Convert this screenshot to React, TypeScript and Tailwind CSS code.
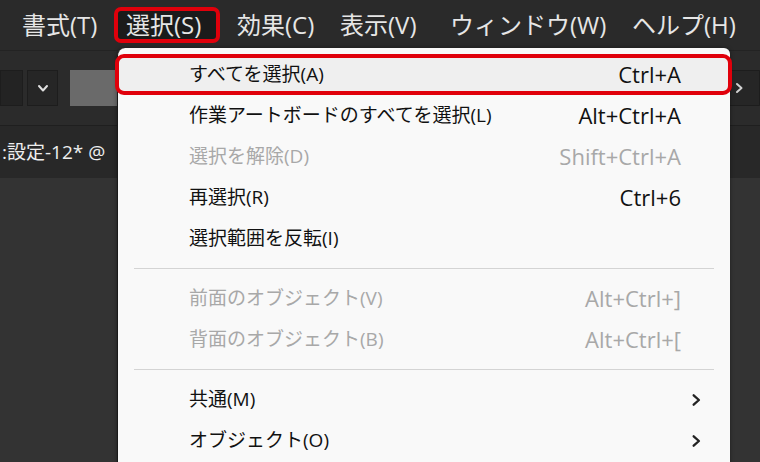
import { ReactNode } from 'react'

const font = { fontFamily: '"Open Sans", "Noto Sans CJK JP", sans-serif' }

type Row =
  | { kind: 'sep' }
  | { kind: 'item'; label: string; shortcut?: string; disabled?: boolean; sub?: boolean; active?: boolean }

const rows: Row[] = [
  { kind: 'item', label: 'すべてを選択(A)', shortcut: 'Ctrl+A', active: true },
  { kind: 'item', label: '作業アートボードのすべてを選択(L)', shortcut: 'Alt+Ctrl+A' },
  { kind: 'item', label: '選択を解除(D)', shortcut: 'Shift+Ctrl+A', disabled: true },
  { kind: 'item', label: '再選択(R)', shortcut: 'Ctrl+6' },
  { kind: 'item', label: '選択範囲を反転(I)' },
  { kind: 'sep' },
  { kind: 'item', label: '前面のオブジェクト(V)', shortcut: 'Alt+Ctrl+]', disabled: true },
  { kind: 'item', label: '背面のオブジェクト(B)', shortcut: 'Alt+Ctrl+[', disabled: true },
  { kind: 'sep' },
  { kind: 'item', label: '共通(M)', sub: true },
  { kind: 'item', label: 'オブジェクト(O)', sub: true }
]

const menus = [
  { label: '書式(T)', w: 'w-[105px]' },
  { label: '選択(S)', w: 'w-[110px]', open: true },
  { label: '効果(C)', w: 'w-[103px]' },
  { label: '表示(V)', w: 'w-[110px]' },
  { label: 'ウィンドウ(W)', w: 'w-[182px]' },
  { label: 'ヘルプ(H)', w: 'w-[130px]' }
]

function Chevron({ dir, className }: { dir: 'right' | 'down'; className?: string }) {
  return (
    <svg viewBox="0 0 12 12" className={className} fill="none" stroke="currentColor" strokeWidth="2" strokeLinecap="round" strokeLinejoin="round">
      {dir === 'right' ? <path d="M4 2 L8.5 6 L4 10" /> : <path d="M2 4 L6 8.5 L10 4" />}
    </svg>
  )
}

function MenuRow({ row }: { row: Row }): ReactNode {
  if (row.kind === 'sep') {
    return (
      <div className="h-[19px] flex items-center pl-[16px] pr-[16px]">
        <div className="h-px w-full bg-[#d4d4d4]" />
      </div>
    )
  }
  const color = row.disabled ? 'text-[#a8a8a8]' : 'text-[#111]'
  const box = row.active
    ? 'ml-[-3px] mr-[-2px] border-[4px] border-[#e0000b] rounded-[9px] bg-[#efefef] pl-[70px] pr-[47px]'
    : 'pl-[71px] pr-[49px]'
  return (
    <div className={`h-[41px] flex items-center text-[19px] ${color} ${box}`}>
      <span className="flex-1 whitespace-nowrap">{row.label}</span>
      {row.shortcut && <span className="text-[22px] whitespace-nowrap">{row.shortcut}</span>}
      {row.sub && <Chevron dir="right" className="w-[14px] h-[14px] mr-[-22px] text-[#222]" />}
    </div>
  )
}

export default function App() {
  return (
    <div className="w-[760px] h-[462px] overflow-hidden bg-[#333333] relative" style={font}>
      {/* menubar */}
      <div className="h-[50px] bg-[#2a2a2a] flex items-center pl-[9px] text-[24px] text-[#e6e6e6]">
        {menus.map((m) => (
          <div key={m.label} className={`${m.w} shrink-0`}>
            {m.open ? (
              <div className="w-[106px] h-[36px] border-[4px] border-[#e0000b] rounded-[7px] bg-[#1b1b1b] flex items-center pl-[8px] whitespace-nowrap">
                {m.label}
              </div>
            ) : (
              <div className="pl-[13px] whitespace-nowrap">{m.label}</div>
            )}
          </div>
        ))}
      </div>

      {/* control bar */}
      <div className="h-[75px] bg-[#2b2b2b] border-t border-[#232323] flex items-center justify-between">
        <div className="flex items-center gap-[4px]">
          <div className="w-[23px] h-[36px] bg-[#232323] border border-[#1d1d1d]" />
          <div className="w-[31px] h-[36px] bg-[#262626] border border-[#1d1d1d] flex items-center justify-center text-[#e0e0e0]">
            <Chevron dir="down" className="w-[12px] h-[12px]" />
          </div>
          <div className="w-[80px] h-[36px] ml-[8px] bg-[#6a6a6a]" />
        </div>
        <div className="w-[38px] h-[36px] bg-[#262626] border border-[#1d1d1d] rounded-l-[3px] flex items-center pl-[10px] text-[#d0d0d0]">
          <Chevron dir="right" className="w-[12px] h-[12px]" />
        </div>
      </div>

      {/* document tab */}
      <div className="h-[53px] bg-[#282828] border-t border-[#1f1f1f] flex items-center pl-[2px] text-[19px] text-[#eeeeee] whitespace-nowrap">
        <span>:設定-12* @</span>
      </div>

      {/* Select dropdown */}
      <div className="absolute left-[117px] top-[48px] w-[613px] h-[420px] bg-[#f9f9f9] rounded-tl-[8px] rounded-tr-[6px] border-l border-[#1a1a1a] pt-[6px] shadow-[0_0_4px_rgba(0,0,0,0.4)]">
        {rows.map((r, i) => (
          <MenuRow key={i} row={r} />
        ))}
      </div>
    </div>
  )
}
